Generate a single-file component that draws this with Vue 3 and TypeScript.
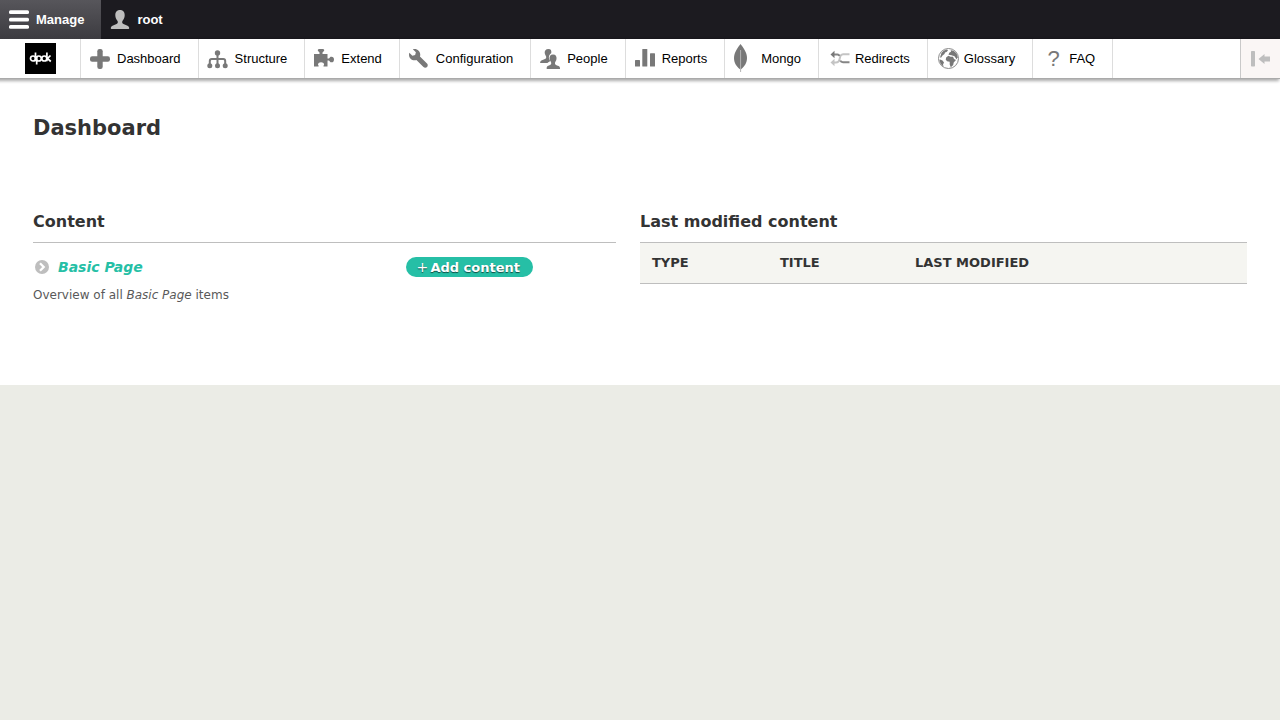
<script setup lang="ts">
interface MenuItem {
  label: string
  icon: string
}

const menu: MenuItem[] = [
  { label: 'Dashboard', icon: 'plus' },
  { label: 'Structure', icon: 'tree' },
  { label: 'Extend', icon: 'puzzle' },
  { label: 'Configuration', icon: 'wrench' },
  { label: 'People', icon: 'people' },
  { label: 'Reports', icon: 'chart' },
  { label: 'Mongo', icon: 'leaf' },
  { label: 'Redirects', icon: 'redirect' },
  { label: 'Glossary', icon: 'globe' },
  { label: 'FAQ', icon: 'question' },
]
</script>

<template>
  <div class="page">
    <header class="toolbar">
      <nav class="bar" aria-label="Toolbar">
        <button type="button" class="tab active">
          <svg class="tab-icon" viewBox="0 0 20 20" fill="#fff" aria-hidden="true">
            <rect y="0.3" width="20" height="3.7" rx="1.5" />
            <rect y="7.7" width="20" height="3.7" rx="1.5" />
            <rect y="15.1" width="20" height="3.7" rx="1.5" />
          </svg>
          Manage
        </button>
        <button type="button" class="tab">
          <svg class="tab-icon" viewBox="0 0 20 20" fill="#bebebe" aria-hidden="true">
            <path d="M10 0C6.800 0 5.300 2.200 5.300 5.200C5.300 7.800 6.500 9.600 7.400 10.700C8.300 12 7.800 13.500 6.500 14.100L2.500 15.700C1.200 16.300 .8 17.300 .8 18.300Q.8 19 1.500 19H18.500Q19.200 19 19.200 18.300C19.200 17.300 18.800 16.300 17.500 15.700L13.500 14.100C12.200 13.500 11.700 12 12.600 10.700C13.500 9.600 14.700 7.800 14.700 5.200C14.700 2.200 13.200 0 10 0Z" />
          </svg>
          root
        </button>
      </nav>
      <nav class="tray" aria-label="Administration menu">
        <a class="home" href="#" aria-label="dpdk">
          <svg class="logo" viewBox="0 0 31 31" aria-hidden="true">
            <rect width="31" height="31" fill="#000" />
            <g fill="none" stroke="#fff" stroke-width="1.700">
              <circle cx="8" cy="15.500" r="2.500" />
              <path d="M10.500 9.500V18.300" />
              <circle cx="13.800" cy="15.500" r="2.500" />
              <path d="M11.700 13V21.500" />
              <circle cx="19.300" cy="15.500" r="2.500" />
              <path d="M21.900 9.500V18.300M25.500 12.500L22.500 15.500L25.800 18.500" />
            </g>
          </svg>
        </a>
        <a v-for="item in menu" :key="item.label" class="item" href="#">
          <svg class="icon" viewBox="0 0 20 20" fill="#787878" aria-hidden="true">
            <template v-if="item.icon === 'plus'">
              <rect x="7.300" width="5.400" height="20" rx="2.200" />
              <rect y="7.300" width="20" height="5.400" rx="2.200" />
            </template>
            <template v-else-if="item.icon === 'tree'">
              <circle cx="9.500" cy="4" r="2.700" />
              <path d="M9.500 5V16M1.800 16V12Q1.800 10 3.800 10H15.200Q17.200 10 17.200 12V16" fill="none" stroke="#787878" stroke-width="2" />
              <circle cx="1.800" cy="16.700" r="2.500" />
              <circle cx="9.500" cy="16.700" r="2.500" />
              <circle cx="17.200" cy="16.700" r="2.500" />
            </template>
            <path v-else-if="item.icon === 'puzzle'" d="M0 5H5.500V3.500L3.800 1.800Q3.500 0 5 0H9Q10.500 0 10.200 1.800L8.500 3.500V5H13.500V9.500H15L16.500 7.800Q19.800 7 20 10.500Q19.800 14 16.500 13.200L15 11.500H13.500V17.500H9.500V16.800Q10.800 15.500 9.500 14Q7 12.300 4.600 14Q3.300 15.500 4.600 16.800V17.500H0Z" />
            <path v-else-if="item.icon === 'wrench'" transform="scale(1.250)" d="M14.416 11.586l-.01-.008v-.001l-5.656-5.656c.15-.449.252-.921.252-1.421 0-2.485-2.016-4.500-4.502-4.500-.505 0-.981.102-1.434.255l2.431 2.431-.588 2.196-2.196.588-2.445-2.445c-.162.464-.268.956-.268 1.475 0 2.486 2.014 4.500 4.500 4.500.5 0 .972-.102 1.421-.251l5.667 5.665c.781.781 2.047.781 2.828 0s.781-2.047 0-2.828z" />
            <template v-else-if="item.icon === 'people'">
              <path d="M8.500 0C5.600 0 4.500 1.800 4.700 4C4.900 6 6.400 6.900 6.200 8.400C6.100 9.800 4.300 10.300 2.500 10.900C.7 11.500 0 12.300 .2 14H7.500Q8 13.200 9.500 12.700L10 11.500C8.500 9.500 8.400 7 10 5.300L11.300 4C11.500 1.500 11 0 8.500 0Z" />
              <path d="M13 5.500C10.200 5.500 9.300 7.600 9.600 10C9.900 12.200 11.600 13 11.200 14.700C11 16 9.200 16.200 8.200 16.700C6.800 17.300 6.500 18.500 6.700 20H20C20.200 18.300 19.700 17.400 18 16.700C16.700 16.200 15.200 16 15 14.700C14.700 13 16.200 12.200 16.500 10C16.800 7.600 15.800 5.500 13 5.500Z" />
            </template>
            <template v-else-if="item.icon === 'chart'">
              <rect y="11" width="5" height="6.500" rx=".5" />
              <rect x="7.300" width="5" height="17.500" rx=".5" />
              <rect x="15" y="4.300" width="5" height="13.200" rx=".5" />
            </template>
            <g v-else-if="item.icon === 'leaf'">
              <path d="M6.500-5C3.500-1 0 3.500 0 9C0 14 2.500 17.500 6 20.300H7C10.500 17.500 13 14 13 9C13 3.500 9.500-1 6.500-5Z" />
              <path d="M6.600 1V23" fill="none" stroke="#b4b4b4" />
            </g>
            <g v-else-if="item.icon === 'redirect'" fill="none" stroke-width="2">
              <path d="M5 13.500H8Q10.800 13.500 11.500 10.500L12.200 7.500Q13 5.300 15 5.300H21.500" stroke="#c4c4c4" />
              <path d="M2.500 13.500L6.500 9.800V17.200Z" fill="#c4c4c4" />
              <path d="M5 5.500H9.500Q11 5.500 11.300 7M12.300 11.500Q13 13.300 15 13.300H21.500" stroke="#858585" />
              <path d="M2.500 5.500L6.500 1.800V9.200Z" fill="#787878" />
            </g>
            <g v-else-if="item.icon === 'globe'">
              <circle cx="11.500" cy="9.500" r="10" fill="#fff" stroke="#8a8a8a" />
              <path d="M4.500 3.800Q6.500 1 10 .5L11 1.500L9.500 3L8 3.500L7.500 5L5.500 6.500L4.200 8.500L3 8.500ZM3 10.500L5.500 11.500L7 13.500L6 15.500L6.500 17.500Q3 15 2.500 11Z" />
              <path d="M9.300 8.200L11.500 6.800L13.500 7.800L16 7.700L17 10L19 11L16.700 13.500L16.200 16L13.800 18.300L12.700 15.500V12.700L10 12.200L8.700 10.500ZM11.500 5.800L12.200 3.800L14 2.800L13.700 1.200Q17.500 1.500 19.800 5L20.800 8.500L19.500 10.300L17.500 7.300L14.500 6.300Z" />
            </g>
            <text v-else class="mark" x="11.500" y="16.500" text-anchor="middle">?</text>
          </svg>
          {{ item.label }}
        </a>
        <button type="button" class="orient" aria-label="Vertical orientation">
          <svg class="orient-icon" viewBox="0 0 20 16" fill="#bebebe" aria-hidden="true">
            <rect width="4" height="15.500" rx=".7" />
            <path d="M7.500 8L13.500 3V5.500H19V10.500H13.500V13Z" />
          </svg>
        </button>
      </nav>
    </header>

    <main class="main">
      <h1>Dashboard</h1>
      <div class="columns">
        <section class="content">
          <h2>Content</h2>
          <div class="entry">
            <div class="entry-head">
              <a class="entry-title" href="#">
                <svg class="arrow" viewBox="0 0 14 14" aria-hidden="true">
                  <circle cx="7" cy="7" r="7" fill="#bebebe" />
                  <path d="M5 3.300L8.700 7L5 10.700" fill="none" stroke="#fff" stroke-width="2.300" />
                </svg>
                Basic Page
              </a>
              <a class="add" href="#"><span class="add-plus">+</span>Add content</a>
            </div>
            <p>Overview of all <em>Basic Page</em> items</p>
          </div>
        </section>
        <section class="recent">
          <h2>Last modified content</h2>
          <table>
            <thead>
              <tr>
                <th class="type">Type</th>
                <th class="title">Title</th>
                <th>Last modified</th>
              </tr>
            </thead>
          </table>
        </section>
      </div>
    </main>
  </div>
</template>

<style>
html {
  background: #ebece6;
}
body {
  margin: 0;
}
</style>

<style scoped>
.page {
  font-family: "DejaVu Sans", sans-serif;
  color: #333;
}
.toolbar {
  position: relative;
  font: 13px/15px "Liberation Sans", Arial, sans-serif;
}
.bar {
  display: flex;
  height: 39px;
  background: #1c1b20;
}
.tab {
  display: flex;
  align-items: center;
  gap: 7px;
  border: 0;
  padding: 0 17px 0 9px;
  background: transparent;
  color: #fff;
  font: bold 13px/15px "Liberation Sans", Arial, sans-serif;
}
.tab.active {
  background: linear-gradient(#57565b, #3c3b40);
}
.tab-icon {
  width: 20px;
  height: 20px;
}
.tray {
  display: flex;
  height: 39px;
  background: #fff;
  border-bottom: 1px solid #aaa;
  box-shadow: -2px 1px 3px 1px rgba(0, 0, 0, 0.333);
}
.home {
  display: flex;
  align-items: center;
  padding: 0 24px 0 25px;
  border-right: 1px solid #ddd;
}
.logo {
  width: 31px;
  height: 31px;
}
.item {
  display: flex;
  align-items: center;
  gap: 7px;
  padding: 0 17px 0 9px;
  border-right: 1px solid #ddd;
  color: #000;
  text-decoration: none;
  white-space: nowrap;
}
.icon {
  width: 20px;
  height: 20px;
  overflow: visible;
}
.mark {
  font-size: 22px;
}
.orient {
  display: flex;
  align-items: center;
  justify-content: center;
  width: 40px;
  margin-left: auto;
  padding: 0;
  border: 0;
  border-left: 1px solid #c9c9c9;
  background: #faf6f5;
}
.orient-icon {
  width: 20px;
  height: 16px;
}
.main {
  padding: 36px 33px 81px;
  background: #fff;
}
h1 {
  margin: 0 0 68px;
  font-size: 21px;
  line-height: 26px;
}
.columns {
  display: grid;
  grid-template-columns: 1fr 1fr;
}
.content {
  padding-right: 24px;
}
h2 {
  margin: 0;
  padding-bottom: 8px;
  border-bottom: 1px solid #bebebe;
  font-size: 16px;
  line-height: 25px;
}
.entry-head {
  display: flex;
  align-items: center;
  justify-content: space-between;
  max-width: 500px;
  padding-top: 14px;
}
.entry-title {
  display: flex;
  align-items: center;
  gap: 9px;
  padding-left: 2px;
  color: #26bfa6;
  font: italic bold 14px/20px "DejaVu Sans", sans-serif;
  text-decoration: none;
}
.arrow {
  width: 14px;
  height: 14px;
}
.add {
  display: flex;
  align-items: center;
  padding: 1px 13px 0 10px;
  border-radius: 10px;
  background: #26bfa6;
  color: #fff;
  font: bold 13px/19px "DejaVu Sans", sans-serif;
  text-decoration: none;
  text-shadow: 0 1px 1px rgba(0, 0, 0, 0.6);
}
.add-plus {
  width: 14px;
  font-size: 14px;
  font-weight: normal;
}
p {
  margin: 9px 0 0;
  color: #595959;
  font-size: 12px;
  line-height: 18px;
}
.recent h2 {
  border-bottom: 0;
}
table {
  width: 100%;
  border-collapse: collapse;
  table-layout: fixed;
}
thead {
  background: #f5f5f1;
}
th {
  padding: 12px;
  border: solid #bebebe;
  border-width: 1px 0;
  font-size: 13px;
  line-height: 16px;
  text-align: left;
  text-transform: uppercase;
}
.type {
  width: 104px;
}
.title {
  width: 111px;
}
</style>
